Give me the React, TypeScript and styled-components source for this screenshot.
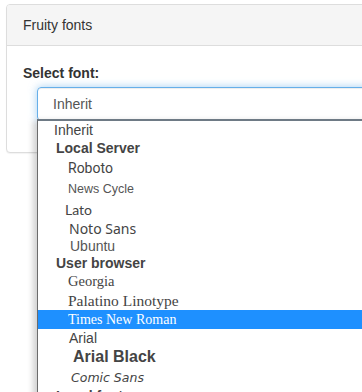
import React from "react";
import styled, { createGlobalStyle } from "styled-components";

const GlobalStyle = createGlobalStyle`
  html, body {
    margin: 0;
    padding: 0;
    background: #fff;
    overflow: hidden;
  }
  body {
    font-family: "Liberation Sans", Arial, sans-serif;
    font-size: 14px;
    color: #333;
  }
`;

interface FontOption {
  label: string;
  family: string;
  size: number;
  indent: number;
  h: number;
  bold?: boolean;
  italic?: boolean;
  selected?: boolean;
  color?: string;
}

const SANS = '"Liberation Sans", Arial, sans-serif';
const SERIF = '"Liberation Serif", "Times New Roman", serif';

const OPTIONS: FontOption[] = [
  { label: "Inherit", family: SANS, size: 14, indent: 16, h: 18 },
  { label: "Local Server", family: SANS, size: 14, indent: 18, h: 18, bold: true },
  { label: "Roboto", family: "Roboto, sans-serif", size: 14, indent: 30, h: 21 },
  { label: "News Cycle", family: SANS, size: 12.5, indent: 30, h: 21, color: "#555" },
  { label: "Lato", family: "Lato, sans-serif", size: 14, indent: 27, h: 20 },
  { label: "Noto Sans", family: '"Noto Sans", sans-serif', size: 14, indent: 31, h: 18 },
  { label: "Ubuntu", family: SANS, size: 14, indent: 32, h: 17, color: "#555" },
  { label: "User browser", family: SANS, size: 14, indent: 18, h: 18, bold: true },
  { label: "Georgia", family: SERIF, size: 14.5, indent: 30, h: 19 },
  { label: "Palatino Linotype", family: SERIF, size: 15.5, indent: 30, h: 19 },
  { label: "Times New Roman", family: SERIF, size: 14, indent: 30, h: 19, selected: true },
  { label: "Arial", family: SANS, size: 14, indent: 31, h: 18 },
  { label: "Arial Black", family: SANS, size: 16, indent: 35, h: 20, bold: true },
  { label: "Comic Sans", family: '"DejaVu Sans", sans-serif', size: 12.5, indent: 33, h: 20, italic: true },
  { label: "Local fonts", family: SANS, size: 14, indent: 18, h: 18, bold: true },
];

export default function App() {
  return (
    <Page>
      <GlobalStyle />
      <Panel>
        <PanelHeading>Fruity fonts</PanelHeading>
        <PanelBody>
          <Label>Select font:</Label>
          <SelectWrap>
            <SelectBox>Inherit</SelectBox>
            <DropList>
              {OPTIONS.map((o) => (
                <Option
                  key={o.label}
                  $family={o.family}
                  $size={o.size}
                  $indent={o.indent}
                  $h={o.h}
                  $bold={o.bold}
                  $italic={o.italic}
                  $selected={o.selected}
                  $color={o.color}
                >
                  {o.label}
                </Option>
              ))}
            </DropList>
          </SelectWrap>
        </PanelBody>
      </Panel>
    </Page>
  );
}

const Page = styled.div`
  width: 362px;
  height: 392px;
  padding: 4px 0 0 6px;
  box-sizing: border-box;
  overflow: hidden;
`;

const Panel = styled.div`
  width: 420px;
  border: 1px solid #ddd;
  border-radius: 4px;
  background: #fff;
  box-shadow: 0 1px 1px rgba(0, 0, 0, 0.05);
`;

const PanelHeading = styled.div`
  height: 41px;
  box-sizing: border-box;
  padding: 0 16px;
  display: flex;
  align-items: center;
  background: #f5f5f5;
  border-bottom: 1px solid #ddd;
  border-radius: 3px 3px 0 0;
  font-size: 14px;
  color: #333;
`;

const PanelBody = styled.div`
  padding: 17px 16px 31px;
`;

const Label = styled.div`
  font-weight: bold;
  font-size: 14px;
  line-height: 20px;
  color: #333;
  margin-bottom: 4px;
`;

const SelectWrap = styled.div`
  position: relative;
  margin-left: 14px;
`;

const SelectBox = styled.div`
  height: 34px;
  box-sizing: border-box;
  padding: 0 15px;
  display: flex;
  align-items: center;
  border: 1px solid #66afe9;
  border-radius: 4px;
  box-shadow: inset 0 1px 1px rgba(0, 0, 0, 0.075), 0 0 8px rgba(102, 175, 233, 0.6);
  font-size: 14px;
  color: #555;
`;

const DropList = styled.div`
  position: absolute;
  left: 0;
  top: 32px;
  width: 400px;
  background: #fff;
  border-left: 1px solid #6b6b6b;
  border-top: 2px solid #6e7a85;
  box-shadow: -4px 2px 6px rgba(0, 0, 0, 0.18);
  z-index: 10;
`;

const Option = styled.div<{
  $family: string;
  $size: number;
  $indent: number;
  $h: number;
  $bold?: boolean;
  $italic?: boolean;
  $selected?: boolean;
  $color?: string;
}>`
  height: ${(p) => p.$h}px;
  display: flex;
  align-items: center;
  padding-left: ${(p) => p.$indent}px;
  font-family: ${(p) => p.$family};
  font-size: ${(p) => p.$size}px;
  font-weight: ${(p) => (p.$bold ? "bold" : "normal")};
  font-style: ${(p) => (p.$italic ? "italic" : "normal")};
  white-space: nowrap;
  color: ${(p) => (p.$selected ? "#fff" : p.$color || "#444")};
  background: ${(p) => (p.$selected ? "#1e90ff" : "transparent")};
`;
